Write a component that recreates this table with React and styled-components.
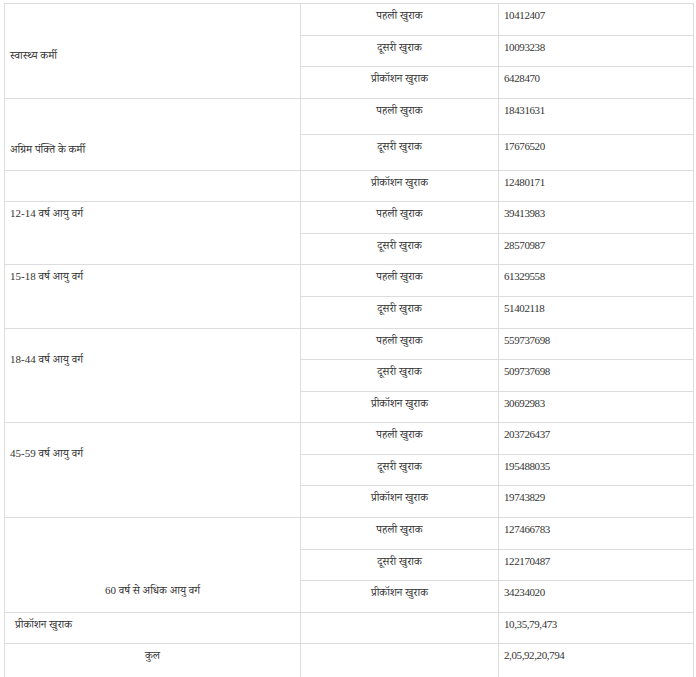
import React from "react";
import styled, { createGlobalStyle } from "styled-components";

const Global = createGlobalStyle`
  html, body { margin: 0; padding: 0; background: #fff; }
  body { font-family: "Liberation Serif", "Noto Serif Devanagari", "Noto Sans Devanagari", serif; }
`;

const Page = styled.div`
  padding: 3px 0 0 4px;
  height: 677px;
  overflow: hidden;
  box-sizing: border-box;
`;

const Table = styled.table`
  width: 690px;
  border-collapse: collapse;
  table-layout: fixed;
  color: #333;
  font-size: 11px;
  line-height: 19.57px;
`;

const Cell = styled.td`
  border: 1px solid #dcdcdc;
  vertical-align: top;
  padding: ${(p) => 2 + (p.$lead || 0)}px 5px ${(p) => 9 + (p.$tail || 0)}px ${(p) => 5 + (p.$indent || 0)}px;
  text-align: ${(p) => (p.$center ? "center" : "left")};
  white-space: nowrap;
`;

const NumCell = styled(Cell)`
  letter-spacing: -0.4px;
`;

const groups = [
  {
    label: "स्वास्थ्य कर्मी",
    lead: 39.5,
    rows: [
      ["पहली खुराक", "10412407"],
      ["दूसरी खुराक", "10093238"],
      ["प्रीकॉशन खुराक", "6428470"],
    ],
  },
  {
    label: "अग्रिम पंक्ति के कर्मी",
    lead: 39.5,
    tail: 1,
    rows: [
      ["पहली खुराक", "18431631"],
      ["दूसरी खुराक", "17676520"],
    ],
  },
  { label: "", rows: [["प्रीकॉशन खुराक", "12480171"]] },
  {
    label: "12-14 वर्ष आयु वर्ग",
    rows: [
      ["पहली खुराक", "39413983"],
      ["दूसरी खुराक", "28570987"],
    ],
  },
  {
    label: "15-18 वर्ष आयु वर्ग",
    rows: [
      ["पहली खुराक", "61329558"],
      ["दूसरी खुराक", "51402118"],
    ],
  },
  {
    label: "18-44 वर्ष आयु वर्ग",
    lead: 19.5,
    rows: [
      ["पहली खुराक", "559737698"],
      ["दूसरी खुराक", "509737698"],
      ["प्रीकॉशन खुराक", "30692983"],
    ],
  },
  {
    label: "45-59 वर्ष आयु वर्ग",
    lead: 19,
    rows: [
      ["पहली खुराक", "203726437"],
      ["दूसरी खुराक", "195488035"],
      ["प्रीकॉशन खुराक", "19743829"],
    ],
  },
  {
    label: "60 वर्ष से अधिक आयु वर्ग",
    lead: 61.5,
    center: true,
    rows: [
      ["पहली खुराक", "127466783"],
      ["दूसरी खुराक", "122170487"],
      ["प्रीकॉशन खुराक", "34234020"],
    ],
  },
];

export default function App() {
  return (
    <>
      <Global />
      <Page>
        <Table>
          <colgroup>
            <col style={{ width: "296px" }} />
            <col style={{ width: "198px" }} />
            <col />
          </colgroup>
          <tbody>
            {groups.map((g, gi) =>
              g.rows.map((r, ri) => (
                <tr key={`${gi}-${ri}`}>
                  {ri === 0 && (
                    <Cell
                      rowSpan={g.rows.length}
                      $lead={g.lead}
                      $tail={g.tail}
                      $center={g.center}
                    >
                      {g.label}
                    </Cell>
                  )}
                  <Cell $center>{r[0]}</Cell>
                  <NumCell>{r[1]}</NumCell>
                </tr>
              ))
            )}
            <tr>
              <Cell $indent={5}>प्रीकॉशन खुराक</Cell>
              <Cell />
              <NumCell>10,35,79,473</NumCell>
            </tr>
            <tr>
              <Cell $center $tail={30}>कुल</Cell>
              <Cell />
              <NumCell>2,05,92,20,794</NumCell>
            </tr>
          </tbody>
        </Table>
      </Page>
    </>
  );
}
